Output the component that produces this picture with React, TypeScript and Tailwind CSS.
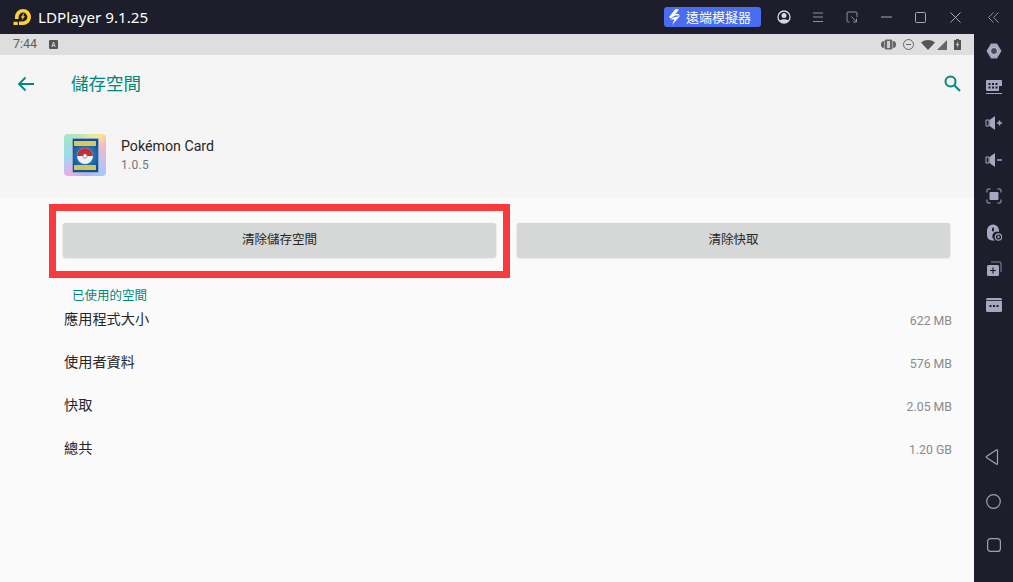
const font = "font-['Roboto','Noto_Sans_CJK_TC',sans-serif]";

function Logo() {
  return (
    <svg width="19" height="17" viewBox="0 0 19 17">
      <path fillRule="evenodd" d="M10 0a8 8 0 0 1 0 16H6v-3.600h4a4.400 4.400 0 1 0-4.400-4.400v2H2V8a8 8 0 0 1 8-8z" fill="#fcd32d" />
      <path d="M10.700 4.400 7.800 8.600h1.700l-.8 3 3.300-4.300h-1.800l1-2.900z" fill="#fcd32d" />
      <rect x="0.500" y="12.800" width="4.300" height="3.200" fill="#fcd32d" />
    </svg>
  );
}

function TitleBar() {
  return (
    <div className="h-[34px] bg-[#1d1d2b] flex items-center shrink-0">
      <div className="ml-[13px] flex items-center">
        <Logo />
      </div>
      <span className="ml-[6px] text-[15.200px] text-white font-['Noto_Sans',sans-serif]">LDPlayer 9.1.25</span>
      <div className="ml-auto flex items-center">
        <div className="w-[97px] h-[20px] rounded-[3px] bg-[#4a6cf0] flex items-center pl-[4px] gap-[5px]">
          <svg width="13" height="16" viewBox="0 0 13 16">
            <path d="M7.500 0 1 8l1.500 1.500L7 6.500h5L10.500 5H7.500L11 .5z" fill="#fff" />
            <path d="M5 8.500 12 7l-8 9 2.500-5.500H2.500z" fill="#fff" />
          </svg>
          <span className={`text-[13px] leading-none text-white ${font}`}>遠端模擬器</span>
        </div>
        <svg className="ml-[16px]" width="14" height="14" viewBox="0 0 14 14">
          <circle cx="7" cy="7" r="6" fill="none" stroke="#d8d8e4" strokeWidth="1.300" />
          <circle cx="7" cy="5.500" r="2.500" fill="#d8d8e4" />
          <path d="M2.500 11c1-2.500 8-2.500 9 0-2 2.500-7 2.500-9 0z" fill="#d8d8e4" />
        </svg>
        <svg className="ml-[21px]" width="12" height="12" viewBox="0 0 12 12" stroke="#8f8fa3" strokeWidth="1">
          <path d="M1 2h10M1 6h10M1 10.500h10" />
        </svg>
        <svg className="ml-[22px]" width="12" height="12" viewBox="0 0 12 12" fill="none" stroke="#8f8fa3" strokeWidth="1">
          <path d="M3.500 11H2a1 1 0 0 1-1-1V2a1 1 0 0 1 1-1h8a1 1 0 0 1 1 1v4M5.500 5.500l4.500 5M10.500 7.500v3.500H7" />
        </svg>
        <svg className="ml-[23px]" width="11" height="12" viewBox="0 0 11 12" stroke="#a9a9ba" strokeWidth="1">
          <path d="M0 6h11" />
        </svg>
        <svg className="ml-[23px]" width="11" height="11" viewBox="0 0 11 11" fill="none" stroke="#a9a9ba" strokeWidth="1">
          <rect x="0.500" y="0.500" width="10" height="10" rx="1" />
        </svg>
        <svg className="ml-[24px]" width="11" height="11" viewBox="0 0 11 11" stroke="#a9a9ba" strokeWidth="1">
          <path d="M0.500 0.500l10 10M10.500 0.500l-10 10" />
        </svg>
        <svg className="ml-[27px] mr-[14px]" width="11" height="11" viewBox="0 0 11 11" fill="none" stroke="#8f8fa3" strokeWidth="1">
          <path d="M5.500 0.500 0.500 5.500l5 5M10.500 0.500l-5 5 5 5" />
        </svg>
      </div>
    </div>
  );
}

function StatusBar() {
  return (
    <div className="h-[21px] bg-[#dedede] flex items-center pl-[13px] pr-[13px] shrink-0">
      <span className="text-[12.500px] text-[#5d5d5d] font-['Roboto',sans-serif]">7:44</span>
      <svg className="ml-[12px]" width="9" height="9" viewBox="0 0 9 9">
        <rect width="9" height="9" rx="1" fill="#555" />
        <path d="M2.800 7 4.500 2l1.700 5M3.400 5.500h2.200" fill="none" stroke="#ddd" strokeWidth="0.900" />
      </svg>
      <div className="ml-auto flex items-center">
        <svg width="15" height="11" viewBox="0 0 15 11" fill="#666">
          <rect x="3.500" y="0.500" width="8" height="10" rx="1.500" />
          <rect x="1" y="2" width="2" height="7" rx="1" />
          <rect x="12" y="2" width="2" height="7" rx="1" />
          <rect x="0" y="3.500" width="1" height="4" />
          <rect x="14" y="3.500" width="1" height="4" />
          <rect x="6" y="2" width="3" height="7" fill="#ccc" />
        </svg>
        <svg className="ml-[7px]" width="11" height="11" viewBox="0 0 11 11" fill="none" stroke="#666" strokeWidth="1">
          <circle cx="5.500" cy="5.500" r="5" />
          <path d="M3 5.500h5" />
        </svg>
        <svg className="ml-[7px]" width="14" height="10" viewBox="0 0 14 10" fill="#555">
          <path d="M0 2.500C4-.8 10-.8 14 2.500L7 10z" />
        </svg>
        <svg className="ml-[2px]" width="10" height="10" viewBox="0 0 10 10" fill="#666">
          <path d="M10 0v10H0z" />
        </svg>
        <svg className="ml-[7px]" width="7" height="11" viewBox="0 0 7 11">
          <path d="M2 0h3v1h2v10H0V1h2z" fill="#555" />
          <path d="M4 2.500 2 6h1.300L3 8.800 5 5H3.700z" fill="#ddd" />
        </svg>
      </div>
    </div>
  );
}

function CardIcon() {
  return (
    <div className="w-[42px] h-[42px] rounded-[4px] bg-[conic-gradient(from_315deg,#9fe6c8,#f6ea8c_22%,#f4b8c4_30%,#a8c8fa_50%,#b6b0f6_62%,#f0a8e8_72%,#9fd8f0_85%,#9fe6c8)] flex items-center justify-center">
      <div className="w-[27px] h-[35px] mt-[1px] rounded-[1px] bg-[radial-gradient(circle,#2f9fe8,#14508f_75%)] border border-[#8ea6c8] flex flex-col items-center justify-between">
        <div className="w-[22px] h-[5px] mt-[2px] bg-[#d9c85a]" />
        <svg width="16" height="16" viewBox="0 0 16 16">
          <circle cx="8" cy="8" r="8" fill="#f2f2f2" />
          <path d="M0 8a8 8 0 0 1 16 0z" fill="#c0303a" />
          <circle cx="8" cy="8" r="2.200" fill="#fff" stroke="#555" strokeWidth="0.600" />
        </svg>
        <div className="w-[22px] h-[5px] mb-[2px] bg-[#cfc858]" />
      </div>
    </div>
  );
}

function ClearButton({ label }: { label: string }) {
  return (
    <button className="flex-1 h-[34px] pt-[1px] rounded-[2px] bg-[#d6d7d7] shadow-[0_1px_2px_rgba(0,0,0,0.18)] text-[12.500px] text-[#262626]">
      {label}
    </button>
  );
}

const storageRows = [
  { label: "應用程式大小", size: "622 MB" },
  { label: "使用者資料", size: "576 MB" },
  { label: "快取", size: "2.05 MB" },
  { label: "總共", size: "1.20 GB" },
];

function AndroidScreen() {
  return (
    <div className={`flex-1 bg-[#fafafa] relative ${font}`}>
      {/* Header */}
      <div className="h-[142px] bg-[#f5f5f5] shadow-[0_1px_1px_rgba(0,0,0,0.02)]">
        <div className="h-[58px] flex items-center pl-[17px] pr-[13px]">
          <svg width="18" height="16" viewBox="0 0 18 16" fill="none" stroke="#00897b" strokeWidth="1.800">
            <path d="M17 8H2M8.500 1.500 2 8l6.500 6.500" />
          </svg>
          <span className="ml-[36px] text-[17.500px] text-[#00897b]">儲存空間</span>
          <svg className="ml-auto mb-[2px]" width="17" height="17" viewBox="0 0 17 17" fill="none" stroke="#00897b" strokeWidth="2">
            <circle cx="6.500" cy="6.500" r="5" />
            <path d="M10 10l6 6" />
          </svg>
        </div>
        <div className="flex items-center pl-[64px] mt-[21px]">
          <CardIcon />
          <div className="ml-[15px]">
            <div className="text-[14.200px] leading-[18px] text-[#262626]">Pokémon Card</div>
            <div className="text-[12px] leading-[18px] mt-[1px] text-[#757575] tracking-[0.3px]">1.0.5</div>
          </div>
        </div>
      </div>

      <div className="flex gap-[21px] pl-[63px] pr-[24px] pt-[26px]">
        <ClearButton label="清除儲存空間" />
        <ClearButton label="清除快取" />
      </div>

      <div className="pl-[72px] mt-[30px] text-[12.500px] leading-[18px] text-[#00897b]">已使用的空間</div>

      <div className="pl-[64px] pr-[22px] mt-[-2px]">
        {storageRows.map((row) => (
          <div key={row.label} className="h-[43px] flex items-center justify-between pb-[9px]">
            <span className="text-[14.200px] text-[#262626]">{row.label}</span>
            <span className="text-[12.300px] pt-[2px] text-[#8a8a8a]">{row.size}</span>
          </div>
        ))}
      </div>

      {/* Red highlight drawn over the screenshot */}
      <div className="absolute left-[49px] top-[149px] w-[461px] h-[74px] border-[7px] border-[#f83a3c]" />
    </div>
  );
}

function SideBar() {
  const c = "#a8a6c0";
  return (
    <div className="w-[39px] bg-[#1d1d2b] flex flex-col items-center pt-[9px] pb-[30px] shrink-0">
      <div className="flex flex-col items-center gap-[20px]">
        <svg width="16" height="16" viewBox="0 0 16 16">
          <path d="M5 .5h6L15.500 8 11 15.500H5L.5 8z" fill={c} />
          <circle cx="8" cy="8" r="3.500" fill="#4a4a5c" stroke="#d8d6e8" strokeWidth="0.800" />
        </svg>
        <svg width="16" height="16" viewBox="0 0 16 16">
          <rect y="1" width="16" height="11" rx="1" fill={c} />
          <path d="M2.500 4h2v2h-2zM6 4h2v2H6zM9.500 4h2v2h-2zM2.500 7.500h2v2h-2zM6 7.500h2v2H6zM9.500 7.500h2v2h-2z" fill="#1d1d2b" />
          <path d="M13 7h3v5h-3z" fill="#1d1d2b" />
          <rect y="14" width="16" height="1" fill={c} />
        </svg>
        <svg width="17" height="16" viewBox="0 0 17 16">
          <path d="M1 5h3v6H1z" fill="none" stroke={c} strokeWidth="1" />
          <path d="M4.500 5 10 1v14l-5.500-4z" fill={c} />
          <path d="M12 8h5M14.500 5.500v5" stroke={c} strokeWidth="1.500" />
        </svg>
        <svg className="mt-[1px]" width="17" height="16" viewBox="0 0 17 16">
          <path d="M1 5h3v6H1z" fill="none" stroke={c} strokeWidth="1" />
          <path d="M4.500 5 10 1v14l-5.500-4z" fill={c} />
          <path d="M12 8h5" stroke={c} strokeWidth="1.500" />
        </svg>
        <svg width="16" height="16" viewBox="0 0 16 16">
          <path d="M1 4.500V2a1 1 0 0 1 1-1h2.500M11.500 1H14a1 1 0 0 1 1 1v2.500M15 11.500V14a1 1 0 0 1-1 1h-2.500M4.500 15H2a1 1 0 0 1-1-1v-2.500" fill="none" stroke={c} strokeWidth="1" />
          <rect x="3.500" y="4" width="9" height="8" rx="1" fill={c} />
        </svg>
        <svg width="16" height="17" viewBox="0 0 16 17">
          <path d="M7 .5a6 6 0 0 1 6 6v1.500a4.500 4.500 0 0 0-4 8.500H6a5 5 0 0 1-5-5V6.500a6 6 0 0 1 6-6z" fill={c} />
          <rect x="6" y="3.500" width="2" height="4" rx="1" fill="#1d1d2b" />
          <circle cx="12.500" cy="13" r="3.200" fill="none" stroke={c} strokeWidth="1.200" />
          <path d="M11.600 11.300l2.500 1.700-2.500 1.700z" fill={c} />
        </svg>
        <svg width="16" height="16" viewBox="0 0 16 16">
          <path d="M5 1h9a1 1 0 0 1 1 1v9" fill="none" stroke={c} strokeWidth="0.800" />
          <rect x="1" y="4" width="12" height="11" rx="1.500" fill={c} />
          <path d="M4 9.500h6M7 6.500v6" stroke="#1d1d2b" strokeWidth="1.200" />
        </svg>
        <svg className="mt-[1px]" width="16" height="14" viewBox="0 0 16 14">
          <rect width="16" height="14" rx="1.500" fill={c} />
          <rect y="2" width="16" height="0.800" fill="#1d1d2b" />
          <path d="M3.500 7h2v2h-2zM7 7h2v2H7zM10.500 7h2v2h-2z" fill="#1d1d2b" />
        </svg>
      </div>
      <div className="mt-auto flex flex-col items-center gap-[29px]">
        <svg className="mr-[3px]" width="14" height="16" viewBox="0 0 14 16" fill="none" stroke="#a0a0ae" strokeWidth="1.200">
          <path d="M12.500 1.200v13.600a.5.500 0 0 1-.8.4L1.400 8.500a.6.600 0 0 1 0-1L11.700.8a.5.500 0 0 1 .8.400z" />
        </svg>
        <svg width="15" height="15" viewBox="0 0 15 15" fill="none" stroke="#a0a0ae" strokeWidth="1.200">
          <circle cx="7.500" cy="7.500" r="6.800" />
        </svg>
        <svg width="14" height="14" viewBox="0 0 14 14" fill="none" stroke="#a0a0ae" strokeWidth="1.200">
          <rect x="0.600" y="0.600" width="12.800" height="12.800" rx="3" />
        </svg>
      </div>
    </div>
  );
}

export default function App() {
  return (
    <div className="w-[1013px] h-[582px] overflow-hidden flex flex-col bg-[#1d1d2b]">
      <TitleBar />
      <div className="flex flex-1 min-h-0">
        <div className="flex-1 flex flex-col min-w-0">
          <StatusBar />
          <AndroidScreen />
        </div>
        <SideBar />
      </div>
    </div>
  );
}
